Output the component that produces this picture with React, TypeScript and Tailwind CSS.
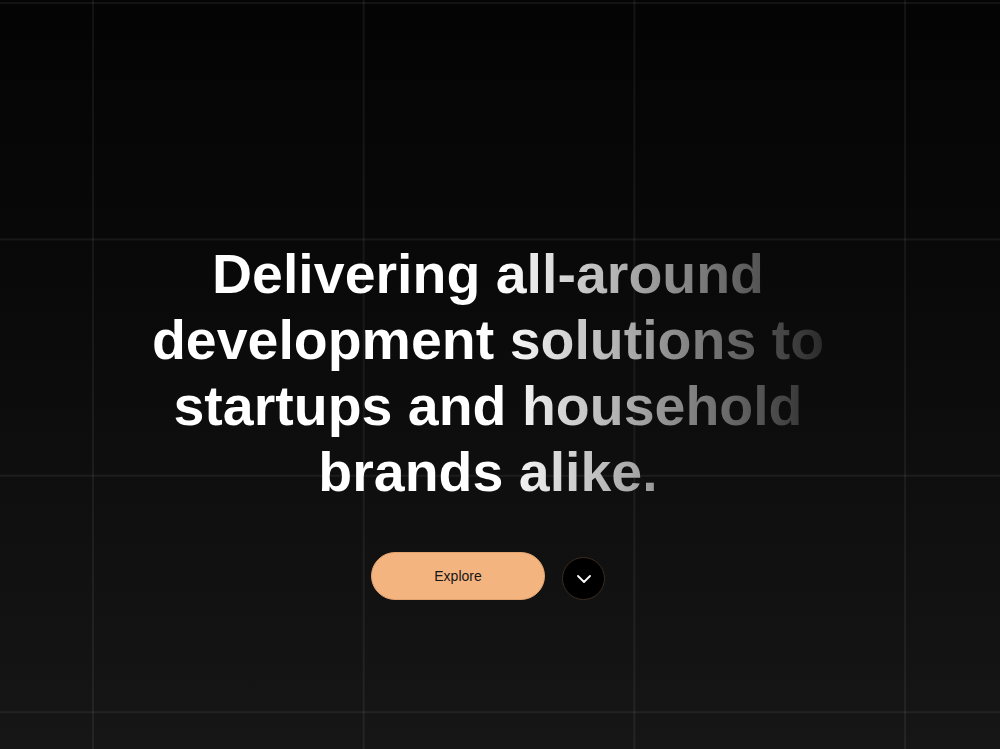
import React from "react";

export default function App() {
  return (
    <div className="w-full h-[749px] overflow-hidden bg-linear-to-b from-[#040404] to-[#161616]">
      <div className="w-full h-full flex flex-col items-center pt-[241px] pr-[24px] bg-[linear-gradient(to_right,rgba(255,255,255,0.06)_2px,transparent_2px),linear-gradient(to_bottom,rgba(255,255,255,0.06)_2px,transparent_2px)] bg-[size:270.7px_236.4px] bg-[position:92px_2px]">
        <h1
          className="w-fit text-center font-bold text-[55.5px] leading-[66px] text-transparent bg-clip-text bg-[linear-gradient(to_right,#ffffff_0%,#ffffff_52%,#2a2a2a_100%)]"
          style={{ fontFamily: '"Liberation Sans", Arial, Helvetica, sans-serif', WebkitBackgroundClip: "text" }}
        >
          Delivering all-around
          <br />
          development solutions to
          <br />
          startups and household
          <br />
          brands alike.
        </h1>
        <div className="mt-[47px] flex items-end gap-[17px]">
          <button
            className="w-[174px] h-[48px] rounded-full bg-[#f4b47f] text-[#161616] text-[14px] border border-[#e0a26f]"
            style={{ fontFamily: '"Liberation Sans", Arial, Helvetica, sans-serif' }}
          >
            Explore
          </button>
          <button className="w-[43px] h-[43px] rounded-full bg-black border border-[#3d2c20] flex items-center justify-center">
            <svg width="14" height="8" viewBox="0 0 14 8" fill="none">
              <path d="M1 1l6 6 6-6" stroke="white" strokeWidth="1.8" strokeLinecap="round" strokeLinejoin="round" />
            </svg>
          </button>
        </div>
      </div>
    </div>
  );
}
